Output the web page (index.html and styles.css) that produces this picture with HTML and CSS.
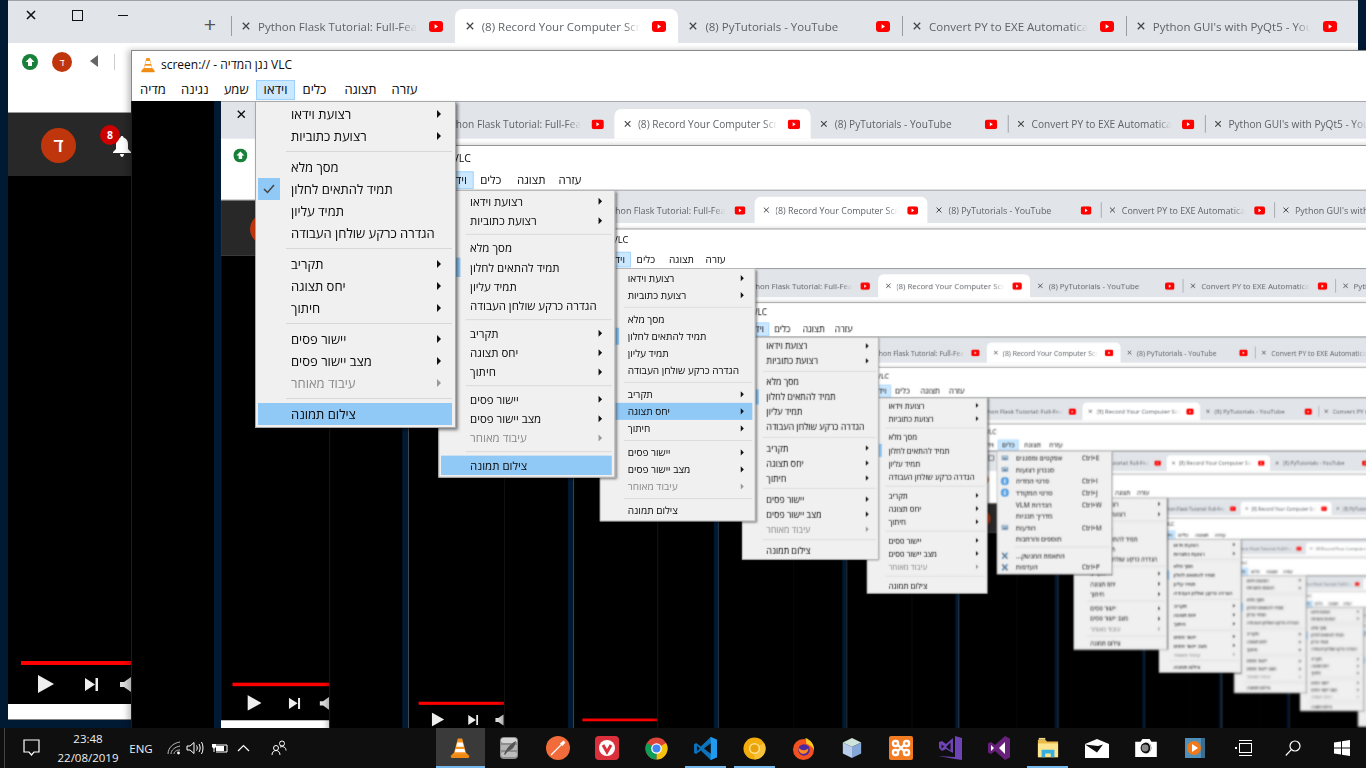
FILE: index.html
```html
<!DOCTYPE html>
<html>
<head>
  <title>VLC screen capture</title>
  <link rel="stylesheet" href="styles.css">
</head>
<body>

<svg class="icon-defs" width="0" height="0">
  <symbol id="i-cone" viewBox="0 0 24 24">
    <path fill="#f08a12" d="M2 20.5l3.500-3.500h13l3.500 3.500c.5 1.500-.5 2.500-2 2.500H4c-1.500 0-2.500-1-2-2.500z"/>
    <path fill="#f6921e" d="M9.600 1.500h4.800L19 19H5z"/>
    <path fill="#fff" d="M9 6h6l1.100 4.500H7.900z"/>
    <path fill="#fff" d="M7.200 13h9.600l1 3.600H6.200z"/>
  </symbol>
  <symbol id="i-yt" viewBox="0 0 14 11">
    <rect width="14" height="11" rx="3" fill="#f00"/>
    <path fill="#fff" d="M5.600 3.200l3.400 2.300-3.400 2.300z"/>
  </symbol>
  <symbol id="i-x" viewBox="0 0 10 10">
    <path fill="none" stroke="currentColor" stroke-width="1.600" d="M1 1l8 8M9 1l-8 8"/>
  </symbol>
  <symbol id="i-info" viewBox="0 0 16 16">
    <circle cx="8" cy="8" r="7.500" fill="#3d8fdc"/>
    <circle cx="8" cy="8" r="5.500" fill="#6fb2ee"/>
    <rect x="7" y="7" width="2" height="5" fill="#fff"/>
    <rect x="7" y="4" width="2" height="2" fill="#fff"/>
  </symbol>
  <symbol id="i-tools" viewBox="0 0 16 16">
    <path stroke="#4d8fc9" stroke-width="3" d="M3 14L13 3"/>
    <path stroke="#6a7580" stroke-width="3" d="M3 3l10 11"/>
  </symbol>
  <symbol id="i-panel" viewBox="0 0 16 16">
    <rect x="1" y="3" width="14" height="10" rx="1" fill="#7f9fbd"/>
    <rect x="3" y="5" width="10" height="6" fill="#c9d8e6"/>
    <path fill="#45698c" d="M3 11l4-4 3 2 3-1v3z"/>
  </symbol>
</svg>

<div class="stage">
  <div class="desktop" id="desktop"></div>

  <footer class="taskbar">
    <div class="tray">
      <span class="tray-cell tray-notify">
        <svg width="17" height="18" viewBox="0 0 17 18"><path fill="none" stroke="#fff" stroke-width="1.200" d="M1 1h15v12h-5l-2.500 3-2.500-3H1z"/></svg>
      </span>
      <span class="tray-cell tray-clock">
        <span>23:48</span>
        <span>22/08/2019</span>
      </span>
      <span class="tray-cell tray-lang">ENG</span>
      <span class="tray-cell tray-wifi">
        <svg width="14" height="14" viewBox="0 0 14 14"><path fill="none" stroke="#bbb" d="M1 13C1 7 6 2 13 1M4 13c0-4 4-7 9-8M7 13c0-2 2-4 6-4"/><circle cx="11.500" cy="12" r="1.400" fill="#fff"/></svg>
      </span>
      <span class="tray-cell tray-vol">
        <svg width="18" height="14" viewBox="0 0 18 14"><path fill="none" stroke="#fff" d="M1 5h3l4-3.500v11L4 9H1zM10.500 4.500c1 1.500 1 3.500 0 5M13 3c1.500 2.500 1.500 5.500 0 8M15.500 1c2 3.500 2 8.500 0 12"/></svg>
      </span>
      <span class="tray-cell tray-batt">
        <svg width="17" height="12" viewBox="0 0 17 12"><path fill="none" stroke="#fff" d="M5 3h11v7H5"/><rect x="5" y="4" width="8" height="5" fill="#fff"/><path fill="#fff" d="M1 2h4v3l-1.500 1.500V10h-1V6.500L1 5z"/></svg>
      </span>
      <span class="tray-cell tray-chevron">
        <svg width="13" height="8" viewBox="0 0 13 8"><path fill="none" stroke="#fff" stroke-width="1.200" d="M1 7l5.500-5.500L12 7"/></svg>
      </span>
      <span class="tray-cell tray-people">
        <svg width="16" height="16" viewBox="0 0 16 16"><g fill="none" stroke="#fff"><circle cx="5" cy="8" r="2.500"/><circle cx="11" cy="3.500" r="2.500"/><path d="M1 15c0-3 2-4.500 4-4.500s4 1.500 4 4.500M9 7c3-1 6 0 6 3.500"/></g></svg>
      </span>
    </div>

    <div class="apps">
      <span class="app app--active"><svg width="22" height="22"><use href="#i-cone"/></svg></span>
      <span class="app">
        <svg width="18" height="22" viewBox="0 0 18 22"><rect width="18" height="22" rx="4" fill="#8e8e8e"/><rect x="1" y="1" width="16" height="5" rx="2.500" fill="#d4d4d4"/><rect x="1" y="8" width="16" height="5" fill="#b4b4b4"/><rect x="1" y="15" width="16" height="5" rx="2" fill="#bdbdbd"/><path fill="#555" d="M4 17C7 11 10 7 16 4c-1 6-4 9-8 10l-3 4z"/></svg>
      </span>
      <span class="app">
        <svg width="24" height="24" viewBox="0 0 24 24"><circle cx="12" cy="12" r="12" fill="#f26b3a"/><path stroke="#fff" stroke-width="1.300" d="M5 19L16 8"/><path fill="#fff" d="M14 7.500l3.500-3 2 2-3 3.500z"/></svg>
      </span>
      <span class="app">
        <svg width="24" height="24" viewBox="0 0 24 24"><rect width="24" height="24" rx="4" fill="#d9303c"/><circle cx="12" cy="12" r="8" fill="#fff"/><path fill="none" stroke="#d9303c" stroke-width="3" d="M8 9l4 7 4-7"/></svg>
      </span>
      <span class="app">
        <svg width="23" height="23" viewBox="0 0 24 24"><circle cx="12" cy="12" r="11.500" fill="#db4437"/><path fill="#f4c20d" d="M12 12L21.960 6.250A11.500 11.500 0 0 1 12 23.500z"/><path fill="#0f9d58" d="M12 12v11.500A11.500 11.500 0 0 1 2.040 6.250z"/><circle cx="12" cy="12" r="5.500" fill="#fff"/><circle cx="12" cy="12" r="4.200" fill="#4285f4"/></svg>
      </span>
      <span class="app app--open">
        <svg width="25" height="25" viewBox="0 0 24 24"><path fill="#0c73bd" d="M17 1L7.500 10 3 6.800 1 7.800v8.400l2 1L7.500 14l9.500 9 6-2.500v-17z"/><path fill="#1f9cf0" d="M17 1l6 2.500v17L17 23z"/><path fill="#0f0f0f" d="M17 7l-6.500 5 6.500 5zM3.800 9.300v5.400L6.500 12z"/></svg>
      </span>
      <span class="app app--open">
        <svg width="23" height="23" viewBox="0 0 24 24"><circle cx="12" cy="12" r="11.500" fill="#f2ac0c"/><path fill="#f7c23a" d="M12 12L21.960 6.250A11.500 11.500 0 0 1 12 23.500z"/><circle cx="12" cy="12" r="5" fill="#e9a20a" stroke="#ffe08a" stroke-width="1.500"/></svg>
      </span>
      <span class="app">
        <svg width="23" height="23" viewBox="0 0 24 24"><circle cx="12" cy="13" r="11" fill="#f3511f"/><path fill="#ffc91f" d="M14 1c6 2 9 7 9 12-2-3-5-5-8-6z"/><circle cx="12.500" cy="13.500" r="6" fill="#4c2aa0"/><path fill="#ff8a1f" d="M7 11c2 3 6 4 10 1 0 4-3 6-6 5.500-3-.5-4.500-3.500-4-6.500z"/></svg>
      </span>
      <span class="app">
        <svg width="22" height="22" viewBox="0 0 24 24"><path fill="#cfe5dc" d="M12 1l10 5-10 5L2 6z"/><path fill="#b7cdea" d="M2 6l10 5v12L2 18z"/><path fill="#84a7d8" d="M22 6l-10 5v12l10-5z"/></svg>
      </span>
      <span class="app">
        <svg width="24" height="24" viewBox="0 0 24 24"><rect width="24" height="24" rx="2" fill="#f27c21"/><g fill="none" stroke="#fff" stroke-width="2.400"><rect x="4" y="5" width="5" height="5" rx="2"/><rect x="15" y="5" width="5" height="5" rx="2"/><rect x="4" y="14" width="5" height="5" rx="2"/><rect x="15" y="14" width="5" height="5" rx="2"/><path d="M9 9l6 6M15 9l-6 6"/></g></svg>
      </span>
      <span class="app">
        <svg width="24" height="24" viewBox="0 0 24 24"><path fill="#6e43b5" d="M17 0l7 2v22l-7-1-17-3 17 1z"/><path fill="#6e43b5" d="M1 12l0-6 3-1 4 3 7-6v15l-7-4-4 2z"/><path fill="#0f0f0f" d="M12.500 6.500v8L8 11zM3.500 8.500v4L6 10.500z"/></svg>
      </span>
      <span class="app">
        <svg width="22" height="24" viewBox="0 0 22 24"><path fill="#68217a" d="M17 0l5 2.500v19L17 24 7 15l-4 3-3-1.500v-9L3 6l4 3z"/><path fill="#fff" d="M17 6l-6 6 6 6zM3 9v6l3-3z"/></svg>
      </span>
      <span class="app app--open">
        <svg width="22" height="22" viewBox="0 0 24 24"><path fill="#e9b949" d="M1 3h8l2 2h12v17H1z"/><path fill="#fde48e" d="M1 7h22v15H1z"/><path fill="#35aee2" d="M5 14h14v8h-4v-4H9v4H5z"/><rect x="2" y="1" width="7" height="2" fill="#f4d98a"/></svg>
      </span>
      <span class="app">
        <svg width="24" height="19" viewBox="0 0 24 19"><path fill="#fff" d="M0 5L12 0l12 5v14H0z"/><path fill="#0f0f0f" d="M0 5.500l12 8 6-8-5 1.500z"/></svg>
      </span>
      <span class="app">
        <svg width="24" height="18" viewBox="0 0 24 20"><path fill="#fff" d="M0 3h6l2-3h8l2 3h6v17H0z"/><circle cx="12" cy="10" r="6" fill="#0f0f0f"/><circle cx="11" cy="10" r="3.800" fill="#888"/><path fill="none" stroke="#fff" d="M15 5c3 3 3 7 0 10"/></svg>
      </span>
      <span class="app">
        <svg width="20" height="20" viewBox="0 0 20 20"><rect width="20" height="20" fill="#4f8fb8"/><rect x="16" y="0" width="4" height="20" fill="#3c6d8f"/><circle cx="9" cy="10" r="7" fill="#f07a1a"/><path fill="#fff" d="M7 6l6 4-6 4z"/></svg>
      </span>
      <span class="app">
        <svg width="17" height="16" viewBox="0 0 17 16"><g fill="none" stroke="#fff"><rect x="4.500" y="3.500" width="12" height="9"/><path d="M4 .5h13M4 15.500h13"/></g><rect x="0" y="7" width="2" height="2" fill="#fff"/></svg>
      </span>
      <span class="app">
        <svg width="16" height="16" viewBox="0 0 16 16"><circle cx="10" cy="6" r="5" fill="none" stroke="#fff" stroke-width="1.200"/><path stroke="#fff" stroke-width="1.200" d="M6.300 9.700L.8 15.500"/></svg>
      </span>
      <span class="app">
        <svg width="16" height="16" viewBox="0 0 16 16"><path fill="#fff" d="M0 2.500l7-1v6H0zM8 1.300L16 0v7.500H8zM0 8.500h7v6l-7-1zM8 8.500h8V16l-8-1.300z"/></svg>
      </span>
    </div>
  </footer>
</div>

<template id="screen-template">
  <div class="screen">

    <section class="browser">
      <div class="tabstrip">
        <div class="win-controls">
          <span class="win-btn"><svg width="10" height="10"><use href="#i-x"/></svg></span>
          <span class="win-btn"><i class="win-max"></i></span>
          <span class="win-btn"><i class="win-min"></i></span>
        </div>
        <span class="new-tab">+</span>
        <div class="tab tab--sep">
          <svg class="tab-x" width="8" height="8"><use href="#i-x"/></svg>
          <span class="tab-title">Python Flask Tutorial: Full-Feat</span>
          <svg width="14" height="11"><use href="#i-yt"/></svg>
        </div>
        <div class="tab tab--active">
          <svg class="tab-x" width="8" height="8"><use href="#i-x"/></svg>
          <span class="tab-title">(8) Record Your Computer Scre</span>
          <svg width="14" height="11"><use href="#i-yt"/></svg>
        </div>
        <div class="tab">
          <svg class="tab-x" width="8" height="8"><use href="#i-x"/></svg>
          <span class="tab-title">(8) PyTutorials - YouTube</span>
          <svg width="14" height="11"><use href="#i-yt"/></svg>
        </div>
        <div class="tab tab--sep">
          <svg class="tab-x" width="8" height="8"><use href="#i-x"/></svg>
          <span class="tab-title">Convert PY to EXE Automatica</span>
          <svg width="14" height="11"><use href="#i-yt"/></svg>
        </div>
        <div class="tab tab--sep">
          <svg class="tab-x" width="8" height="8"><use href="#i-x"/></svg>
          <span class="tab-title">Python GUI's with PyQt5 - You</span>
          <svg width="14" height="11"><use href="#i-yt"/></svg>
        </div>
      </div>

      <div class="toolbar">
        <svg width="16" height="16" viewBox="0 0 16 16"><circle cx="8" cy="8" r="8" fill="#188038"/><path fill="#fff" d="M8 3.500L12.500 8H10v4H6V8H3.500z"/></svg>
        <span class="toolbar-avatar">ד</span>
        <i class="toolbar-back"></i>
        <i class="toolbar-sep"></i>
      </div>

      <div class="yt-bar">
        <span class="yt-avatar">ד</span>
        <span class="yt-bell">
          <svg width="18" height="21" viewBox="0 0 18 21"><path fill="#fff" d="M9 0c1 0 1.500.7 1.500 1.600C13.500 2.500 15 5 15 8v5l3 3v1H0v-1l3-3V8c0-3 1.500-5.500 4.500-6.400C7.500.7 8 0 9 0zM7 18h4c0 1.500-1 3-2 3s-2-1.500-2-3z"/></svg>
          <span class="yt-badge">8</span>
        </span>
      </div>

      <div class="yt-player">
        <div class="yt-progress"></div>
        <div class="yt-controls">
          <svg width="16" height="18" viewBox="0 0 16 18"><path fill="#eee" d="M0 0l16 9-16 9z"/></svg>
          <svg width="13" height="13" viewBox="0 0 13 13"><path fill="#eee" d="M0 0l10 6.500L0 13zM10.500 0H13v13h-2.500z"/></svg>
          <svg width="11" height="15" viewBox="0 0 11 15"><path fill="#ddd" d="M0 5h4l7-5v15L4 10H0z"/></svg>
        </div>
      </div>
      <div class="browser-foot"></div>
    </section>

    <section class="vlc">
      <div class="vlc-title">
        <svg width="16" height="16"><use href="#i-cone"/></svg>
        <span>screen:// - נגן המדיה VLC</span>
      </div>
      <nav class="vlc-menubar">
        <span class="vlc-menu-btn" dir="rtl">מדיה</span>
        <span class="vlc-menu-btn" dir="rtl">נגינה</span>
        <span class="vlc-menu-btn" dir="rtl">שמע</span>
        <span class="vlc-menu-btn" data-menu="video" dir="rtl">וידאו</span>
        <span class="vlc-menu-btn" data-menu="tools" dir="rtl">כלים</span>
        <span class="vlc-menu-btn" dir="rtl">תצוגה</span>
        <span class="vlc-menu-btn" dir="rtl">עזרה</span>
      </nav>
      <div class="vlc-video"></div>

      <div class="menu menu--video">
        <div class="menu-item"><span dir="rtl">רצועת וידאו</span><i class="arrow"></i></div>
        <div class="menu-item"><span dir="rtl">רצועת כתוביות</span><i class="arrow"></i></div>
        <hr class="menu-sep">
        <div class="menu-item"><span dir="rtl">מסך מלא</span></div>
        <div class="menu-item">
          <span class="menu-check"><svg width="12" height="10" viewBox="0 0 12 10"><path fill="none" stroke="#444" stroke-width="1.500" d="M1 5l3.500 3.500L11 1"/></svg></span>
          <span dir="rtl">תמיד להתאים לחלון</span>
        </div>
        <div class="menu-item"><span dir="rtl">תמיד עליון</span></div>
        <div class="menu-item"><span dir="rtl">הגדרה כרקע שולחן העבודה</span></div>
        <hr class="menu-sep">
        <div class="menu-item"><span dir="rtl">תקריב</span><i class="arrow"></i></div>
        <div class="menu-item" data-key="aspect"><span dir="rtl">יחס תצוגה</span><i class="arrow"></i></div>
        <div class="menu-item"><span dir="rtl">חיתוך</span><i class="arrow"></i></div>
        <hr class="menu-sep">
        <div class="menu-item"><span dir="rtl">יישור פסים</span><i class="arrow"></i></div>
        <div class="menu-item"><span dir="rtl">מצב יישור פסים</span><i class="arrow"></i></div>
        <div class="menu-item menu-item--off"><span dir="rtl">עיבוד מאוחר</span><i class="arrow"></i></div>
        <hr class="menu-sep">
        <div class="menu-item" data-key="snapshot"><span dir="rtl">צילום תמונה</span></div>
      </div>

      <div class="menu menu--tools">
        <div class="tool-item"><svg width="14" height="14"><use href="#i-panel"/></svg><span dir="rtl">אפקטים ומסננים</span><kbd>Ctrl+E</kbd></div>
        <div class="tool-item"><svg width="14" height="14"><use href="#i-panel"/></svg><span dir="rtl">סנכרון רצועות</span><kbd></kbd></div>
        <div class="tool-item"><svg width="16" height="16"><use href="#i-info"/></svg><span dir="rtl">פרטי המדיה</span><kbd>Ctrl+I</kbd></div>
        <div class="tool-item"><svg width="16" height="16"><use href="#i-info"/></svg><span dir="rtl">פרטי המקודד</span><kbd>Ctrl+J</kbd></div>
        <div class="tool-item"><i></i><span dir="rtl">הגדרות VLM</span><kbd>Ctrl+W</kbd></div>
        <div class="tool-item"><i></i><span dir="rtl">מדריך תכניות</span><kbd></kbd></div>
        <div class="tool-item"><svg width="14" height="14"><use href="#i-panel"/></svg><span dir="rtl">הודעות</span><kbd>Ctrl+M</kbd></div>
        <div class="tool-item"><i></i><span dir="rtl">תוספים והרחבות</span><kbd></kbd></div>
        <hr class="menu-sep menu-sep--tools">
        <div class="tool-item"><svg width="16" height="16"><use href="#i-tools"/></svg><span dir="rtl">התאמת המנשק...</span><kbd></kbd></div>
        <div class="tool-item"><svg width="16" height="16"><use href="#i-tools"/></svg><span dir="rtl">העדפות</span><kbd>Ctrl+P</kbd></div>
      </div>
    </section>

  </div>
</template>

<script src="app.js"></script>
</body>
</html>
```

FILE: styles.css
```css
body {
  margin: 0;
  background-color: #001a33;
  font-family: "Open Sans", "Liberation Sans", sans-serif;
  font-size: 12px;
  overflow: hidden;
}

svg {
  flex: none;
}

.icon-defs {
  position: absolute;
}

.stage {
  width: 1366px;
  height: 768px;
  display: flex;
  flex-direction: column;
  overflow: hidden;
}

.desktop {
  height: 728px;
  overflow: hidden;
  flex: none;
}

/* one captured screen, the next one sits inside its video area */
.screen {
  position: relative;
  width: 1366px;
  height: 768px;
  background-color: #001a33;
}

.vlc-video > .screen {
  position: absolute;
  left: 82px;
  top: 0;
  transform: scale(0.88);
  transform-origin: 0 0;
  filter: blur(0.42px);
}

/* chrome */
.browser {
  width: 1350px;
  height: 720px;
  margin-left: 8px;
  display: flex;
  flex-direction: column;
  background-color: #fff;
}

.tabstrip {
  height: 43px;
  flex: none;
  display: flex;
  align-items: flex-end;
  background-color: #e1e4e8;
  border-top: 1px solid #9ea2a6;
  box-sizing: border-box;
}

.win-controls {
  display: flex;
  align-self: flex-start;
  width: 138px;
  color: #111;
}

.win-btn {
  width: 46px;
  height: 28px;
  display: flex;
  align-items: center;
  justify-content: center;
}

.win-max {
  width: 9px;
  height: 9px;
  border: 1px solid #111;
}

.win-min {
  width: 10px;
  height: 1px;
  background-color: #111;
}

.new-tab {
  width: 42px;
  margin-left: 43px;
  height: 34px;
  line-height: 32px;
  font-size: 21px;
  text-align: center;
  color: #555;
  font-family: "Liberation Sans", sans-serif;
}

.tab {
  position: relative;
  width: 223.7px;
  height: 34px;
  flex: none;
  display: flex;
  align-items: center;
  padding: 0 12px 0 11px;
  box-sizing: border-box;
  color: #5f6368;
  font-size: 11.500px;
}

.tab--sep::before {
  content: "";
  position: absolute;
  left: 0;
  top: 7px;
  height: 20px;
  width: 1px;
  background-color: #999ca1;
}

.tab--active {
  background-color: #fff;
  border-radius: 8px 8px 0 0;
}

.tab-x {
  color: #444;
  margin-right: 8px;
}

.tab-title {
  flex: 1;
  white-space: nowrap;
  overflow: hidden;
  margin-right: 12px;
  -webkit-mask-image: linear-gradient(to right, #000 90%, transparent);
  mask-image: linear-gradient(to right, #000 90%, transparent);
}

.toolbar {
  height: 70px;
  flex: none;
  display: flex;
  align-items: flex-start;
  padding: 11px 0 0 14px;
  box-sizing: border-box;
  background-color: #fff;
  border-bottom: 1px solid #999;
}

.toolbar-avatar {
  width: 20px;
  height: 20px;
  margin: -2px 0 0 14px;
  border-radius: 50%;
  background-color: #bf360c;
  color: #fff;
  font-size: 10px;
  line-height: 20px;
  text-align: center;
}

.toolbar-back {
  width: 0;
  height: 0;
  margin: 1px 0 0 18px;
  border-style: solid;
  border-width: 6px 8px 6px 0;
  border-color: transparent #666 transparent transparent;
}

.toolbar-sep {
  width: 1px;
  height: 16px;
  margin-left: 16px;
  background-color: #ccc;
}

.yt-bar {
  height: 63px;
  flex: none;
  display: flex;
  align-items: center;
  padding-left: 33px;
  background-color: #282828;
}

.yt-avatar {
  width: 35px;
  height: 35px;
  margin-top: 1px;
  border-radius: 50%;
  background-color: #bf360c;
  color: #fff;
  font-size: 19px;
  font-weight: 600;
  line-height: 35px;
  text-align: center;
}

.yt-bell {
  position: relative;
  margin: 7px 0 0 37px;
}

.yt-badge {
  position: absolute;
  left: -13px;
  top: -11px;
  width: 20px;
  height: 20px;
  border-radius: 50%;
  background-color: #c00;
  color: #fff;
  font-size: 10.500px;
  font-weight: bold;
  line-height: 20px;
  text-align: center;
}

.yt-player {
  flex: 1;
  display: flex;
  flex-direction: column;
  justify-content: flex-end;
  background-color: #000;
}

.yt-progress {
  height: 4px;
  margin: 0 0 10px 13px;
  background-color: #f00;
}

.yt-controls {
  height: 29px;
  display: flex;
  align-items: flex-start;
  padding-left: 30px;
}

.yt-controls svg + svg {
  margin: 3px 0 0 31px;
}

.yt-controls svg + svg + svg {
  margin: 2px 0 0 22px;
}

.browser-foot {
  height: 16px;
  flex: none;
  box-sizing: border-box;
  border-bottom: 1px solid #808080;
  background-color: #fff;
}

/* vlc */
.vlc {
  position: absolute;
  left: 131px;
  top: 50px;
  width: 1400px;
  height: 720px;
  display: flex;
  flex-direction: column;
  box-shadow: -3px 0 6px rgba(0, 0, 0, 0.25);
  color: #0a0a0a;
}

.vlc-title {
  height: 28px;
  flex: none;
  display: flex;
  align-items: center;
  gap: 5px;
  padding-left: 8px;
  box-sizing: border-box;
  background-color: #fff;
  border-top: 1px solid #888;
  border-left: 1px solid #888;
}

.vlc-menubar {
  height: 23px;
  flex: none;
  display: flex;
  align-items: center;
  box-sizing: border-box;
  background-color: #fff;
  border-left: 1px solid #888;
  font-size: 13px;
}

.vlc-menu-btn {
  height: 20px;
  line-height: 17px;
  padding: 0 6.500px;
  box-sizing: border-box;
  border: 1px solid transparent;
}

.vlc-menu-btn[data-menu="tools"] {
  margin-right: 3px;
}

.vlc-menu-btn:first-child {
  padding-left: 7px;
}

.vlc-menu-btn.is-open {
  background-color: #cce8ff;
  border-color: #99d1ff;
}

.vlc-video {
  position: relative;
  flex: 1;
  overflow: hidden;
  background-color: #000;
  border-left: 1px solid #1c1c1c;
}

.menu {
  position: absolute;
  top: 51px;
  padding: 1px 3px 2px 2px;
  box-sizing: border-box;
  background-color: #f0f0f0;
  border: 1px solid #a8a8a8;
  box-shadow: 2px 2px 3px rgba(0, 0, 0, 0.5);
  font-size: 13px;
}

.menu--video {
  left: 124px;
  width: 201px;
}

.menu--tools {
  left: 162px;
  width: 218px;
}

.menu-item {
  position: relative;
  height: 22px;
  display: flex;
  align-items: center;
  justify-content: space-between;
  padding: 0 11px 0 33px;
}

.menu-item.is-active {
  background-color: #90c8f6;
}

.menu-item--off {
  color: #8a8a8a;
}

.menu-check {
  position: absolute;
  left: 0;
  top: 0;
  width: 22px;
  height: 22px;
  display: flex;
  align-items: center;
  justify-content: center;
  background-color: #90c8f6;
}

.arrow {
  width: 0;
  height: 0;
  border-style: solid;
  border-width: 4px 0 4px 4px;
  border-color: transparent transparent transparent #111;
}

.menu-item--off .arrow {
  border-left-color: #999;
}

.menu-sep {
  height: 1px;
  margin: 4px 0 4px 28px;
  border: 0;
  background-color: #d7d7d7;
}

.menu-sep--tools {
  margin-left: 30px;
}

.tool-item {
  height: 22px;
  display: grid;
  grid-template-columns: 24px 1fr 53px;
  align-items: center;
  column-gap: 9px;
  justify-items: start;
}

.tool-item svg {
  justify-self: center;
}

.tool-item kbd {
  font: inherit;
  font-size: 12px;
}

/* taskbar */
.taskbar {
  height: 40px;
  flex: none;
  display: flex;
  background-color: #0f0f0f;
  color: #eee;
}

.tray {
  width: 431px;
  margin-left: 4px;
  flex: none;
  display: flex;
  border-left: 1px solid #444;
}

.tray-cell {
  height: 40px;
  flex: none;
  display: flex;
  align-items: center;
  justify-content: center;
}

.tray-notify {
  width: 53px;
}

.tray-clock {
  width: 60px;
  flex-direction: column;
  line-height: 19px;
  font-size: 11.500px;
}

.tray-lang {
  width: 46px;
  font-size: 11.500px;
}

.tray-wifi {
  width: 20px;
}

.tray-vol {
  width: 22px;
}

.tray-batt {
  width: 26px;
}

.tray-chevron {
  width: 22px;
}

.tray-people {
  width: 34px;
  margin-left: 8px;
}

.apps {
  flex: 1;
  display: flex;
}

.app {
  position: relative;
  flex: 1;
  height: 40px;
  display: flex;
  align-items: center;
  justify-content: center;
}

.app--active {
  background-color: #3a3a3a;
}

.app--active::after,
.app--open::after {
  content: "";
  position: absolute;
  bottom: 0;
  left: 4px;
  right: 4px;
  height: 2px;
  background-color: #76b9ed;
}

.app--active::after {
  left: 0;
  right: 0;
}
```

FILE: app.js
```js
// every level is the whole screen captured again inside the vlc video area
const LEVELS = [
  { active: 'snapshot' },
  { active: 'snapshot' },
  { active: 'aspect' },
  {},
  {},
  { menu: 'tools' },
  {},
  {},
  {},
  {},
  {}
];

const template = document.getElementById('screen-template');
let slot = document.getElementById('desktop');

LEVELS.forEach(level => {
  const node = template.content.cloneNode(true);
  const screen = node.querySelector('.screen');
  const menu = level.menu || 'video';

  screen.querySelector(`.menu--${menu === 'video' ? 'tools' : 'video'}`).remove();
  screen.querySelector(`[data-menu="${menu}"]`).classList.add('is-open');

  if (level.active) {
    screen.querySelector(`[data-key="${level.active}"]`).classList.add('is-active');
  }

  slot.appendChild(node);
  slot = screen.querySelector('.vlc-video');
});
```
